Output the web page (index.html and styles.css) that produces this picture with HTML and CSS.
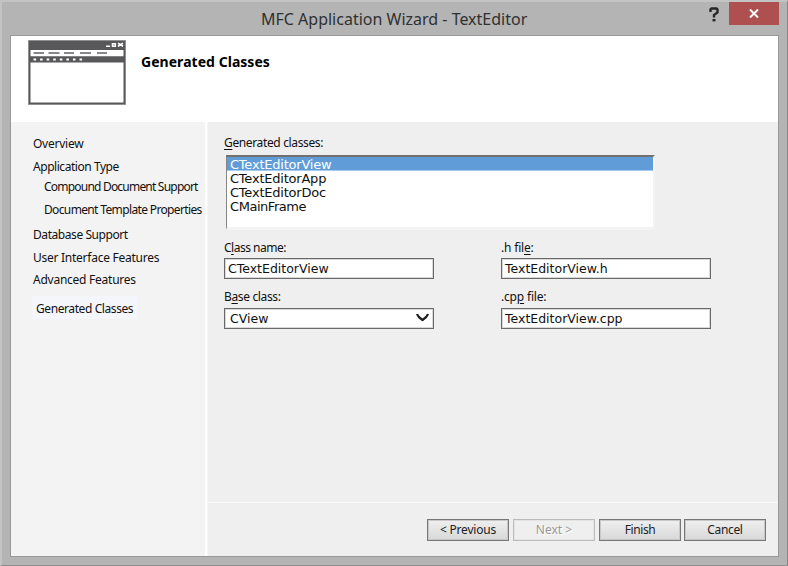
FILE: index.html
```html
<!DOCTYPE html>
<html lang="en">
<head>
<meta charset="utf-8">
<title>MFC Application Wizard - TextEditor</title>
<link rel="stylesheet" href="styles.css">
</head>
<body>
<div class="window">
  <header class="titlebar">
    <h1 class="title">MFC Application Wizard - TextEditor</h1>
    <svg class="help" width="11" height="15" viewBox="0 0 11 15"><path d="M1.500 5V2.500L2.500 1.500H7.500L8.500 2.500V5.500L5 8V10.500" fill="none" stroke="#262626" stroke-width="2.4"/><path d="M3.500 12h3v2.400h-3z" fill="#262626"/></svg>
    <button class="close" aria-label="Close"><svg width="10" height="9" viewBox="0 0 10 9"><path d="M1 .5L9 8.5M9 .5L1 8.5" stroke="#fff" stroke-width="2"/></svg></button>
  </header>
  <main class="dialog">
    <section class="banner">
      <svg class="logo" width="98" height="65" viewBox="0 0 98 65">
        <rect width="98" height="65" fill="#a8a8a9"/>
        <rect x=".7" y=".7" width="96.6" height="63.6" fill="#58585a"/>
        <path d="M2.500 10h93v6.300h-93zM2.500 23h93v39.500h-93z" fill="#fff"/>
        <path d="M2.500 22.500h93" stroke="#aaa"/>
        <path d="M5.500 13h10.500M20.500 13h11M36 13h10M52 13h11M69 13h10" stroke="#626264" stroke-width="1.600"/>
        <path d="M5.500 19.500H55" stroke="#fff" stroke-width="2.200" stroke-dasharray="2.600 3.970"/>
        <path d="M78 6.300h4M84.500 3.800h2.800v2.400h-2.800zM90 3.300l5 3M95 3.300l-5 3" fill="none" stroke="#fff" stroke-width="1.600"/>
      </svg>
      <h2 class="heading">Generated Classes</h2>
    </section>
    <div class="body">
      <nav class="sidebar">
        <a class="step s1">Overview</a>
        <a class="step s2">Application Type</a>
        <a class="step sub s3">Compound Document Support</a>
        <a class="step sub s4">Document Template Properties</a>
        <a class="step s5">Database Support</a>
        <a class="step s6">User Interface Features</a>
        <a class="step s7">Advanced Features</a>
        <a class="step current">Generated Classes</a>
      </nav>
      <section class="page">
        <div class="form">
          <div class="label l-list"><u>G</u>enerated classes:</div>
          <ul class="list">
            <li class="selected">CTextEditorView</li>
            <li>CTextEditorApp</li>
            <li>CTextEditorDoc</li>
            <li class="frame">CMainFrame</li>
          </ul>
          <div class="fields">
            <div class="field"><div class="label l-class">C<u>l</u>ass name:</div><div class="input">CTextEditorView</div></div>
            <div class="field"><div class="label l-h">.h fil<u>e</u>:</div><div class="input">TextEditorView.h</div></div>
            <div class="field lower"><div class="label l-base">B<u>a</u>se class:</div><div class="input select">CView<svg width="13" height="9" viewBox="0 0 13 9"><path d="M1 1Q2 4 6.500 7Q11 4 12 1" fill="none" stroke="#1f1f1f" stroke-width="2.200"/></svg></div></div>
            <div class="field lower"><div class="label l-cpp">.cp<u>p</u> file:</div><div class="input">TextEditorView.cpp</div></div>
          </div>
        </div>
        <footer class="actions">
          <button class="btn">&lt; Previous</button>
          <button class="btn disabled">Next &gt;</button>
          <button class="btn finish">Finish</button>
          <button class="btn last">Cancel</button>
        </footer>
      </section>
    </div>
  </main>
</div>
</body>
</html>
```
FILE: styles.css
```css
* { box-sizing: border-box; }
body { margin: 0; font: 12px/16px "Noto Sans", "Open Sans", sans-serif; color: #111; }
h1, h2, ul { margin: 0; padding: 0; font-weight: normal; list-style: none; }
button { font: inherit; padding: 0; margin: 0; border: 0; }
.window { width: 788px; height: 566px; background: #b4b4b4; border: 2px solid #c3c3c3; border-right: 1px solid #858585; border-bottom: 1px solid #8b8b8b; padding: 0 8px 8px; display: flex; flex-direction: column; }
.titlebar { height: 33px; flex: none; display: flex; align-items: flex-start; padding-left: 251px; }
.title { width: 448px; font-size: 16px; line-height: 22px; padding-top: 6px; color: #303030; white-space: nowrap; }
.help { margin-top: 5px; width: 11px; }
.close { width: 50px; height: 23px; margin-left: 9px; background: #af5050; display: flex; align-items: center; justify-content: center; flex: none; }
.dialog { width: 769px; height: 522px; border: 1px solid #989898; background: #fff; }
.banner { height: 86px; display: flex; padding: 4px 0 0 17px; }
.heading { margin: 12px 0 0 15px; font-size: 14px; line-height: 20px; font-weight: 700; letter-spacing: .04px; color: #000; white-space: nowrap; }
.body { height: 434px; display: flex; gap: 2px; }
.sidebar { width: 194px; background: #f3f3f3; padding: 14px 0 0 22px; display: flex; flex-direction: column; align-items: flex-start; }
.step { height: 16px; margin-bottom: 7px; white-space: nowrap; }
.sub { margin-left: 11px; }
.s1 { letter-spacing: -.25px; }
.s2 { margin-bottom: 4px; letter-spacing: -.45px; }
.s3 { letter-spacing: -.79px; }
.s4 { margin-bottom: 9px; letter-spacing: -.64px; }
.s5 { letter-spacing: -.43px; }
.s6 { margin-bottom: 6px; letter-spacing: -.26px; }
.s7 { margin-bottom: 8px; letter-spacing: -.25px; }
.current { margin-left: -1px; padding: 5px 4px 0; height: 23px; width: 105px; background: #f5f6fc; letter-spacing: -.41px; }
.page { width: 571px; background: #efefef; display: flex; flex-direction: column; border-left: 1px solid #f6f6f6; }
.form { height: 380px; padding: 13px 0 0 16px; }
.label { height: 16px; white-space: nowrap; color: #111; }
.label u { text-underline-offset: 2px; }
.l-list { letter-spacing: -.36px; }
.l-class { letter-spacing: -.5px; }
.l-base { letter-spacing: -.35px; }
.l-h, .l-cpp { letter-spacing: -.18px; }
.list { width: 429px; height: 75px; margin: 4px 0 0 2px; border-style: solid; border-width: 2px 2px 3px; border-color: #707070 #f3f3f3 #f3f3f3 #858585; border-left-width: 1px; background: #fff; font: 13px/16px "DejaVu Sans", sans-serif; letter-spacing: -.22px; color: #101010; }
.list li { height: 14px; padding-left: 3px; }
.list .selected { background: #609dd8; color: #fff; box-shadow: inset 0 -1px #a7cbed; }
.list .frame { letter-spacing: -.45px; line-height: 15px; }
.fields { display: grid; grid-template-columns: 210px 210px; column-gap: 67px; row-gap: 10px; padding-top: 10px; }
.input { width: 210px; height: 21px; margin-top: 2px; border: 1px solid #696969; box-shadow: inset 0 0 0 1px #d8d8d8; background: #fff; padding: 1px 4px 0 3px; font: 12.5px/18px "DejaVu Sans", sans-serif; color: #111; display: flex; justify-content: space-between; align-items: center; }
.lower .input { margin-top: 3px; padding-bottom: 1px; }
.select svg { margin-bottom: 2px; }
.select { padding-left: 5px; }
.actions { border-top: 1px solid #fafafa; height: 54px; padding: 16px 0 0 219px; display: flex; gap: 4px; }
.btn { width: 82px; height: 22px; border: 1px solid #777; box-shadow: inset 0 0 0 1px #c8c8c8; background: linear-gradient(#efefef, #d8d8d8); color: #222; line-height: 18px; letter-spacing: -.2px; white-space: nowrap; }
.disabled { border-color: #bbb; background: #efefef; color: #999; text-shadow: 1px 1px #fff; box-shadow: inset 0 0 0 1px #e4e4e4; letter-spacing: 0; }
.finish { letter-spacing: -.45px; }
.last { margin-left: -1px; letter-spacing: -.35px; }
```
